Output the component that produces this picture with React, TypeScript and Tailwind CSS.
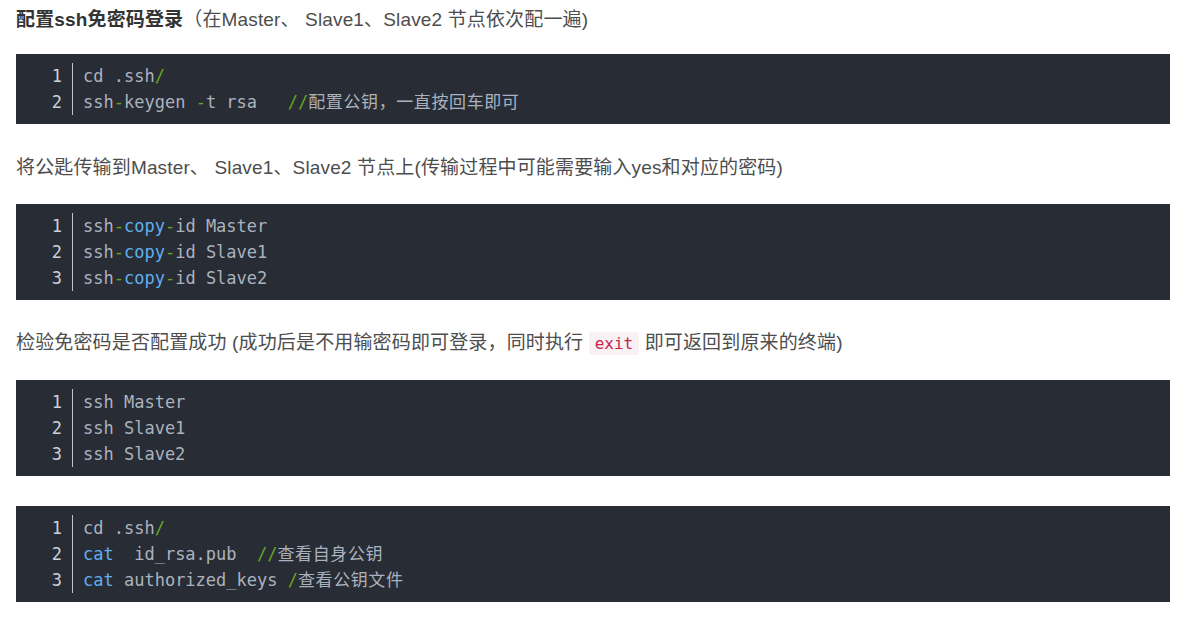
import React from "react";

type Tok = { t: string; c?: "g" | "b" | "z" };

const sans = "font-['Liberation_Sans','Noto_Sans_CJK_SC',sans-serif]";
const mono = "font-['DejaVu_Sans_Mono','Noto_Sans_CJK_SC',monospace]";

function CodeBlock({ lines }: { lines: Tok[][] }) {
  return (
    <div className={`bg-[#282c34] py-[9px] text-[17px] leading-[26px] tracking-normal ${mono}`}>
      <div className="flex">
        <div className="w-[57px] shrink-0 border-r border-[#bfc3c9] pr-[10px] text-right text-[#cdd1d8]">
          {lines.map((_, i) => (
            <div key={i}>{i + 1}</div>
          ))}
        </div>
        <div className="pl-[10px] text-[#abb2bf]">
          {lines.map((line, i) => (
            <div key={i} className="whitespace-pre">
              {line.map((tok, j) => (
                <span
                  key={j}
                  className={
                    tok.c === "g"
                      ? "text-[#67a61f]"
                      : tok.c === "b"
                        ? "text-[#61aeee]"
                        : tok.c === "z"
                          ? "tracking-[0.6px]"
                          : ""
                  }
                >
                  {tok.t}
                </span>
              ))}
            </div>
          ))}
        </div>
      </div>
    </div>
  );
}

export default function App() {
  return (
    <div className={`min-h-screen bg-white pl-4 pr-[14px] pt-[7px] text-[19px] leading-[26px] tracking-[0.15px] text-[#4d4d4d] ${sans}`}>
      <p>
        <b className="text-[#333]">配置ssh免密码登录</b>（在Master、 Slave1、Slave2 节点依次配一遍)
      </p>

      <div className="mt-[21px]">
        <CodeBlock
          lines={[
            [{ t: "cd .ssh" }, { t: "/", c: "g" }],
            [
              { t: "ssh" },
              { t: "-", c: "g" },
              { t: "keygen " },
              { t: "-", c: "g" },
              { t: "t rsa   " },
              { t: "//", c: "g" },
              { t: "配置公钥，一直按回车即可", c: "z" },
            ],
          ]}
        />
      </div>

      <p className="mt-[31px]">将公匙传输到Master、 Slave1、Slave2 节点上(传输过程中可能需要输入yes和对应的密码)</p>

      <div className="mt-[23px]">
        <CodeBlock
          lines={["Master", "Slave1", "Slave2"].map((n) => [
            { t: "ssh" },
            { t: "-", c: "g" },
            { t: "copy", c: "b" },
            { t: "-", c: "g" },
            { t: "id " + n },
          ])}
        />
      </div>

      <p className="mt-[30px]">
        检验免密码是否配置成功 (成功后是不用输密码即可登录，同时执行{" "}
        <code className={`rounded-[3px] bg-[#f9f2f4] px-[6px] py-[2px] text-[16px] tracking-normal text-[#c7254e] ${mono}`}>exit</code>{" "}
        即可返回到原来的终端)
      </p>

      <div className="mt-[23px]">
        <CodeBlock
          lines={["Master", "Slave1", "Slave2"].map((n) => [{ t: "ssh " + n }])}
        />
      </div>

      <div className="mt-[30px]">
        <CodeBlock
          lines={[
            [{ t: "cd .ssh" }, { t: "/", c: "g" }],
            [
              { t: "cat", c: "b" },
              { t: "  id_rsa.pub  " },
              { t: "//", c: "g" },
              { t: "查看自身公钥", c: "z" },
            ],
            [
              { t: "cat", c: "b" },
              { t: " authorized_keys " },
              { t: "/", c: "g" },
              { t: "查看公钥文件", c: "z" },
            ],
          ]}
        />
      </div>
    </div>
  );
}
